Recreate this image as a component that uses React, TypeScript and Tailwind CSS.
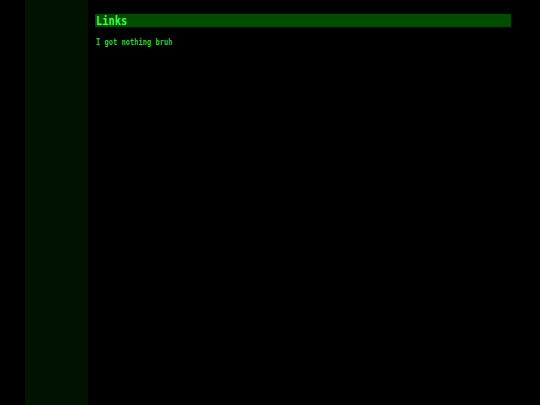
export default function App() {
  return (
    <div className="flex h-[405px] w-[540px] bg-black overflow-hidden" style={{ fontFamily: '"DejaVu Sans Mono", "Liberation Mono", monospace' }}>
      <div className="ml-[25px] w-[63px] shrink-0 bg-[#011201]" />
      <main className="ml-[7px] w-[416px] pt-[14px]">
        <h1 className="h-[13px] bg-[#004d00] pl-[1px] text-[12.5px] font-bold leading-[13px] text-[#40ff40]">
          <span className="inline-block origin-left scale-x-[0.83]">Links</span>
        </h1>
        <p className="mt-[11px] pl-[1px] text-[8.5px] font-bold leading-[9px] text-[#33cc33]">
          <span className="inline-block origin-left scale-x-[0.83]">I got nothing bruh</span>
        </p>
      </main>
    </div>
  );
}
